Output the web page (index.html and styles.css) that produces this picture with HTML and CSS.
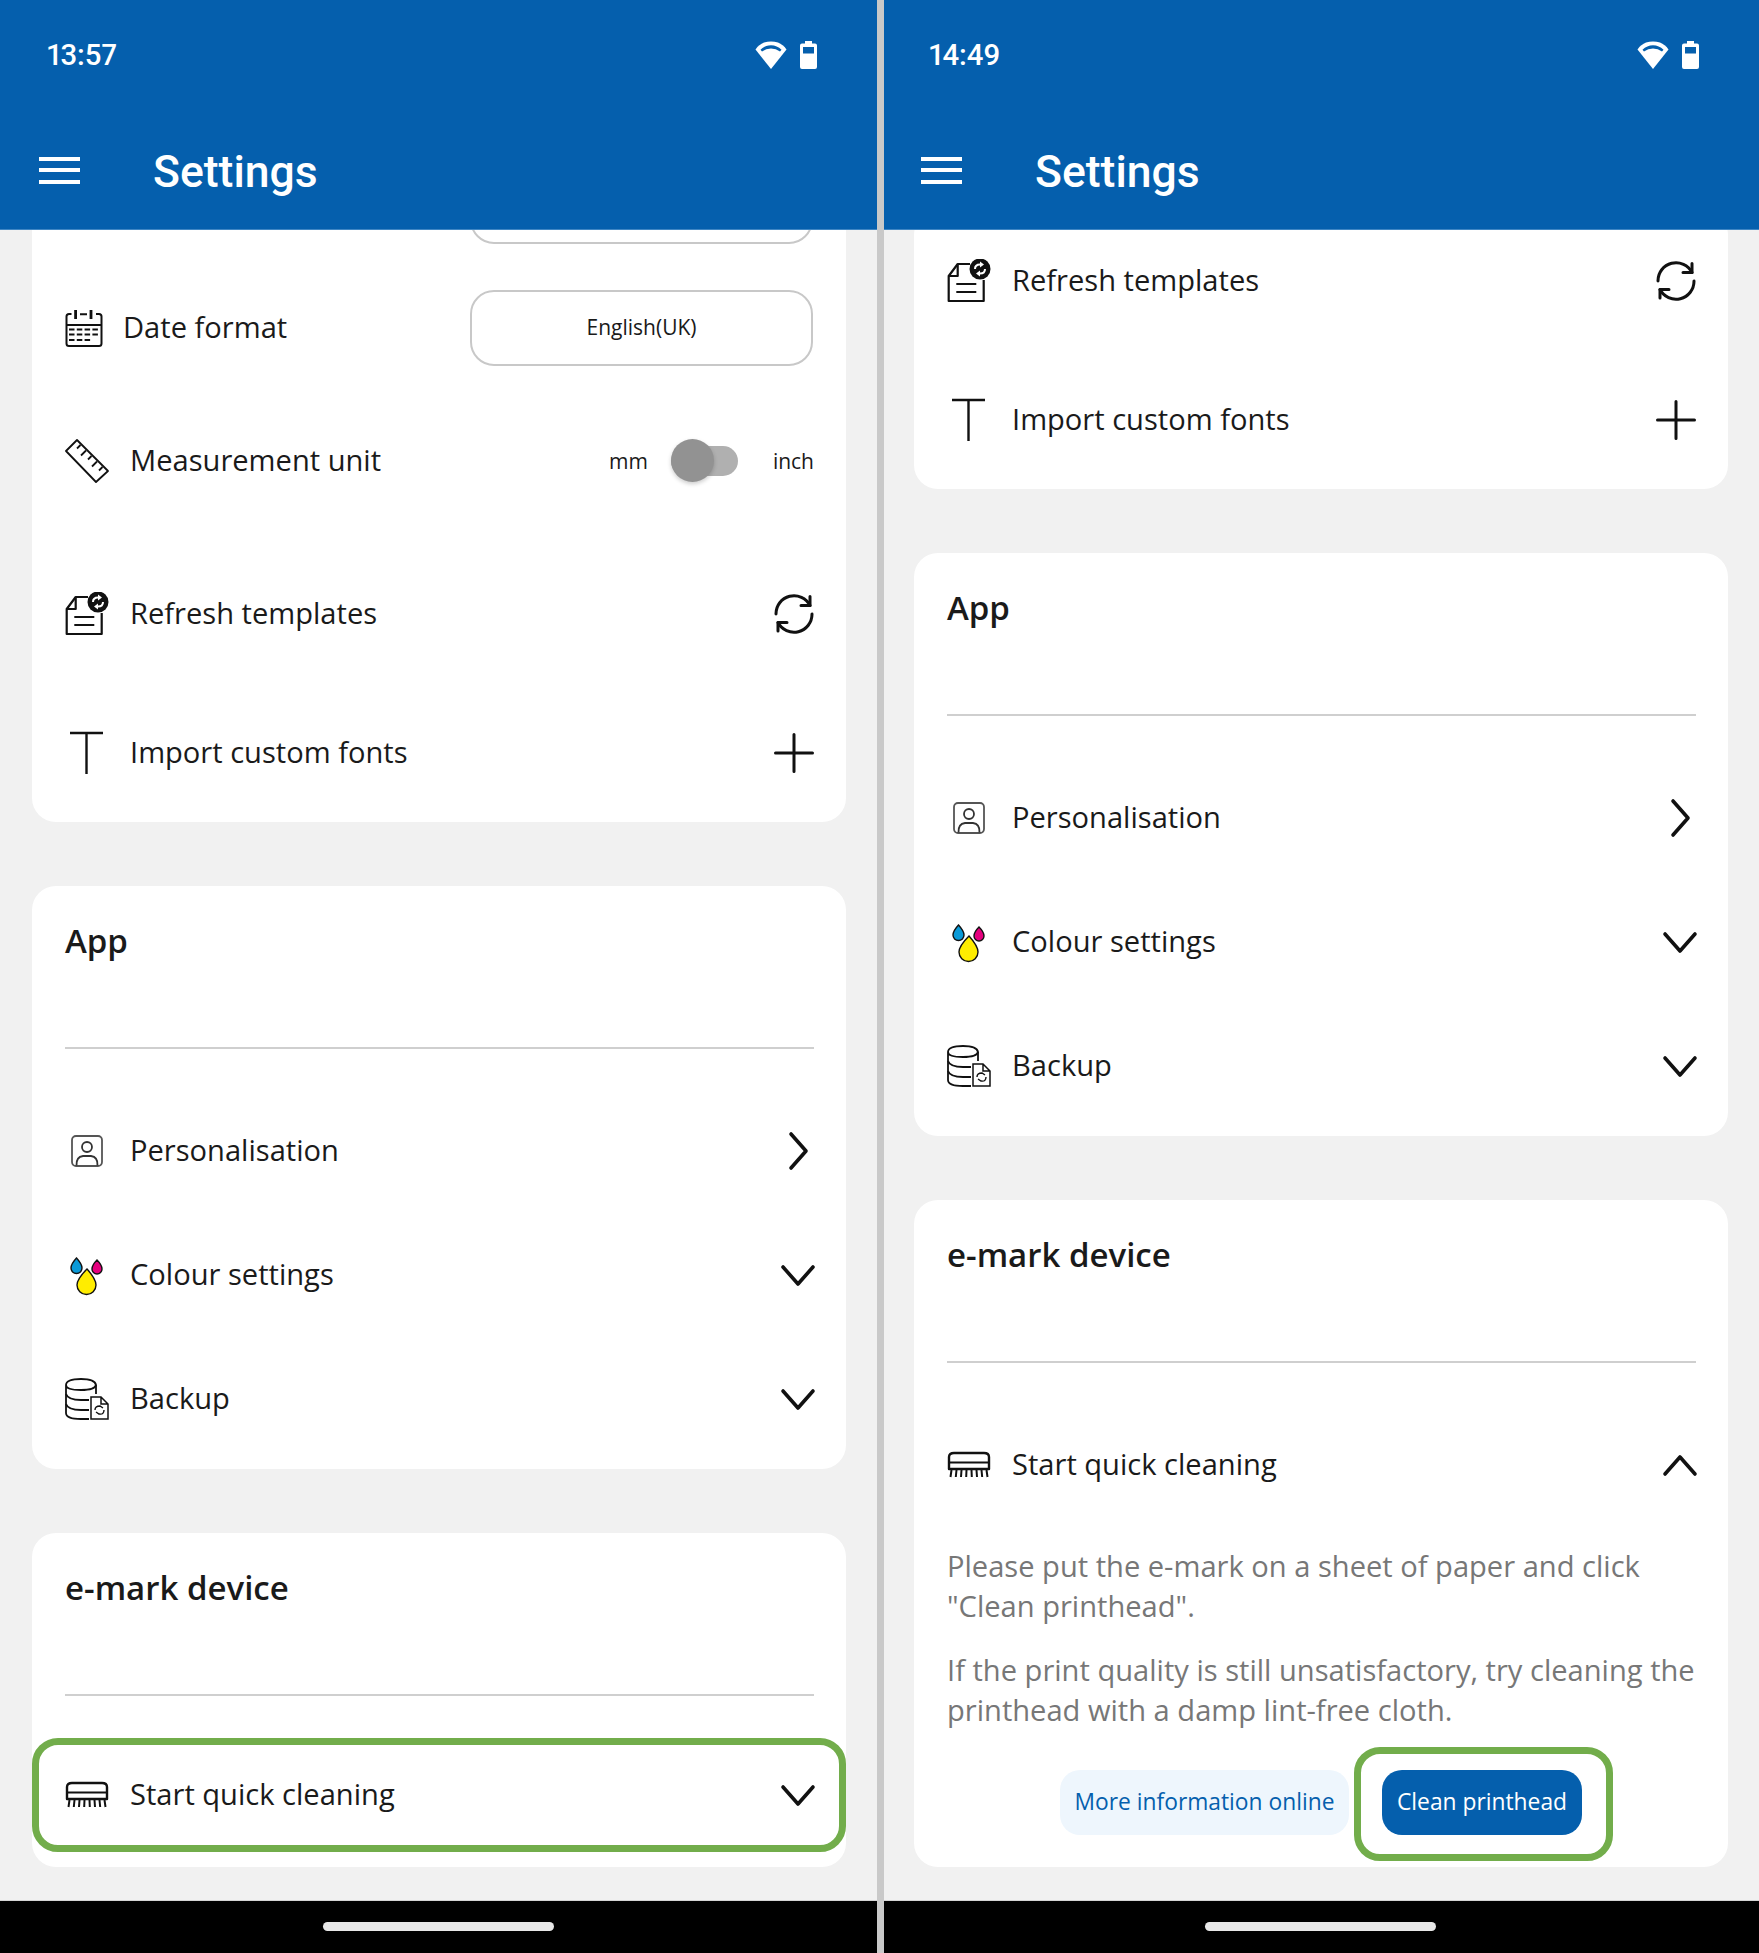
FILE: index.html
```html
<!DOCTYPE html>
<html lang="en">
<head>
  <meta charset="UTF-8">
  <title>Settings</title>
  <link rel="stylesheet" href="styles.css">
</head>
<body>
  <!-- Icon sprite -->
  <svg class="sprite" xmlns="http://www.w3.org/2000/svg">
    <symbol id="i-wifi" viewBox="0 0 32 28">
      <path fill="#fff" d="M16 28 L0.5 8.5 Q4 3.5 9 1.6 Q16 -0.8 23 1.6 Q28 3.5 31.5 8.5 Z"/>
      <path fill="#055fad" d="M5.5 8.8 Q10 4.2 16 4.2 Q22 4.2 26.5 8.8 L25 10.6 Q21 7.4 16 7.4 Q11 7.4 7 10.6 Z"/>
    </symbol>
    <symbol id="i-battery" viewBox="0 0 17 28">
      <path fill="#fff" d="M5 0 H12 V2.500 H15 Q17 2.500 17 4.500 V26 Q17 28 15 28 H2 Q0 28 0 26 V4.500 Q0 2.500 2 2.500 H5 Z"/>
      <rect fill="#055fad" x="3" y="6" width="11" height="6.500"/>
    </symbol>
    <symbol id="i-calendar" viewBox="0 0 44 44">
      <g fill="none" stroke="#111" stroke-width="2">
        <path d="M6.500 8 H4 Q1.500 8 1.500 10.500 V37.500 Q1.500 40 4 40 H34 Q36.500 40 36.500 37.500 V10.500 Q36.500 8 34 8 H31"/>
        <path d="M1.500 19 H36.500 M15 8.300 H22"/>
        <path stroke-width="2.800" d="M10.600 4 V13 M26 4 V13"/>
        <path stroke-dasharray="5.500 2.300" d="M4 23.500 H34 M4 28.500 H34 M4 34 H26"/>
      </g>
    </symbol>
    <symbol id="i-ruler" viewBox="0 0 44 44">
      <g fill="none" stroke="#111" stroke-width="1.800" stroke-linejoin="round">
        <path d="M12 1 L1 12 L31 43 L43 32 Z"/>
        <path d="M15.500 6 L12 9.500 M21 11.500 L16 16.500 M26.500 17 L23 20.500 M32 22.500 L27 27.500 M37.500 28 L34 31.500"/>
      </g>
    </symbol>
    <symbol id="i-template" viewBox="0 0 44 44">
      <g fill="none" stroke="#111" stroke-width="2.200" stroke-linejoin="round">
        <path d="M23 5 H10.700 L1.700 17 V42 H36.700 V21"/>
        <path d="M1.700 17 H10.700 V5"/>
        <path d="M9.300 25 H29.300 M9.300 33 H29.300"/>
      </g>
      <circle cx="33" cy="10" r="10.500" fill="#111"/>
      <path fill="none" stroke="#fff" stroke-width="2" d="M28 10 Q28 5.500 33 5.500 M38 10 Q38 14.500 33 14.500"/>
      <path fill="#fff" d="M33 2.500 L37 5.500 L33 8.500 Z M33 11.500 L29 14.500 L33 17.500 Z"/>
    </symbol>
    <symbol id="i-font" viewBox="0 0 44 44">
      <path fill="none" stroke="#111" stroke-width="2.400" d="M5 2 H38 M21.500 2 V43"/>
    </symbol>
    <symbol id="i-person" viewBox="0 0 44 44">
      <g fill="none" stroke="#333" stroke-width="1.800">
        <rect x="7" y="7" width="30" height="30" rx="4" stroke="#555"/>
        <circle cx="22" cy="18" r="5"/>
        <path d="M11.500 36.500 Q11 28 18 27 H26 Q33 28 32.500 36.500"/>
      </g>
    </symbol>
    <symbol id="i-drops" viewBox="0 0 44 44">
      <path fill="#0a9ad8" stroke="#111" stroke-width="1.400" d="M11.500 5 Q17 11 17 15 A5.500 5.500 0 0 1 6 15 Q6 11 11.500 5 Z"/>
      <path fill="#e5007e" stroke="#111" stroke-width="1.400" d="M32 7 Q37 12 37 16 A5 5 0 0 1 27 16 Q27 12 32 7 Z"/>
      <path fill="#ffed00" stroke="#111" stroke-width="1.400" d="M22 16 Q31 26 31 32 A9.500 9.500 0 0 1 12 32 Q12 26 22 16 Z"/>
    </symbol>
    <symbol id="i-backup" viewBox="0 0 44 44">
      <g fill="none" stroke="#111" stroke-width="1.800">
        <path d="M1 8 Q1 2 16 2 Q30 2 31 8 Q30 13 16 13 Q1 13 1 8 V36 Q1 42 16 42 H24"/>
        <path d="M31 8 V17 M1 17 Q3 23 16 23 H24 M1 27 Q3 33 16 33 H24"/>
        <path stroke-width="1.500" d="M26 20 H36 L43 27 V42 H26 Z M36 20 V27 H43"/>
        <path stroke-width="1.400" d="M30 33 Q30 29 35 29 L38 31 M39 33 Q39 38 34 37 L31 35"/>
      </g>
    </symbol>
    <symbol id="i-brush" viewBox="0 0 44 44">
      <path fill="none" stroke="#111" stroke-width="2.400" stroke-linejoin="round" d="M2 26 V14 Q2 10 7 10 H37 Q42 10 42 14 V26 Z"/>
      <path fill="none" stroke="#111" stroke-width="1.800" d="M2 19.500 H42"/>
      <path fill="none" stroke="#111" stroke-width="2" d="M4.500 27 L3.500 34 M9.500 27 L8.800 34 M14.500 27 L14 34 M19.500 27 L19.200 34 M24.500 27 L24.800 34 M29.500 27 L30 34 M34.500 27 L35.200 34 M39.500 27 L40.500 34"/>
    </symbol>
    <symbol id="i-sync" viewBox="0 0 40 40">
      <g fill="none" stroke="#111" stroke-width="3" stroke-linecap="round" stroke-linejoin="round">
        <path d="M2 20 A18 18 0 0 1 36 11.500"/>
        <path d="M38 20 A18 18 0 0 1 4 28.500"/>
        <path d="M36 2.500 V11.500 H27 M4 37 V28.500 H13"/>
      </g>
    </symbol>
    <symbol id="i-plus" viewBox="0 0 40 40">
      <path fill="none" stroke="#111" stroke-width="3" stroke-linecap="round" d="M20 1.500 V38.500 M1.500 20 H38.500"/>
    </symbol>
    <symbol id="i-right" viewBox="0 0 40 40">
      <path fill="none" stroke="#111" stroke-width="3.600" stroke-linecap="round" stroke-linejoin="round" d="M13 3 L28 20 L13 37"/>
    </symbol>
    <symbol id="i-down" viewBox="0 0 40 40">
      <path fill="none" stroke="#111" stroke-width="3.600" stroke-linecap="round" stroke-linejoin="round" d="M5 12 L20 29 L35 12"/>
    </symbol>
    <symbol id="i-up" viewBox="0 0 40 40">
      <path fill="none" stroke="#111" stroke-width="3.600" stroke-linecap="round" stroke-linejoin="round" d="M5 29 L20 12 L35 29"/>
    </symbol>
  </svg>

  <div class="screens">

    <!-- Left phone -->
    <div class="phone">
      <header class="app-header">
        <div class="status-bar">
          <span class="clock">13:57</span>
          <span class="status-icons">
            <svg class="wifi"><use href="#i-wifi"/></svg>
            <svg class="battery"><use href="#i-battery"/></svg>
          </span>
        </div>
        <div class="toolbar">
          <span class="hamburger"><i></i><i></i><i></i></span>
          <span class="screen-title">Settings</span>
        </div>
      </header>

      <main class="content">
        <section class="card">
          <div class="row-select first-select">
            <span class="select-box"></span>
          </div>
          <div class="row-select">
            <svg class="icon"><use href="#i-calendar"/></svg>
            <span class="label label-tight">Date format</span>
            <span class="select-box">English(UK)</span>
          </div>
          <div class="row row-tall row-unit">
            <svg class="icon"><use href="#i-ruler"/></svg>
            <span class="label">Measurement unit</span>
            <span class="unit">mm</span>
            <span class="toggle"></span>
            <span class="unit">inch</span>
          </div>
          <div class="row row-tall">
            <svg class="icon"><use href="#i-template"/></svg>
            <span class="label">Refresh templates</span>
            <svg class="action"><use href="#i-sync"/></svg>
          </div>
          <div class="row row-tall">
            <svg class="icon"><use href="#i-font"/></svg>
            <span class="label">Import custom fonts</span>
            <svg class="action"><use href="#i-plus"/></svg>
          </div>
        </section>

        <section class="card">
          <h2 class="card-title">App</h2>
          <div class="rows">
            <div class="row">
              <svg class="icon"><use href="#i-person"/></svg>
              <span class="label">Personalisation</span>
              <svg class="action chevron"><use href="#i-right"/></svg>
            </div>
            <div class="row">
              <svg class="icon"><use href="#i-drops"/></svg>
              <span class="label">Colour settings</span>
              <svg class="action chevron"><use href="#i-down"/></svg>
            </div>
            <div class="row">
              <svg class="icon"><use href="#i-backup"/></svg>
              <span class="label">Backup</span>
              <svg class="action chevron"><use href="#i-down"/></svg>
            </div>
          </div>
        </section>

        <section class="card card-last">
          <h2 class="card-title">e-mark device</h2>
          <div class="row row-marked">
            <svg class="icon"><use href="#i-brush"/></svg>
            <span class="label">Start quick cleaning</span>
            <svg class="action chevron"><use href="#i-down"/></svg>
          </div>
        </section>
      </main>

      <footer class="nav-bar"><span class="home-pill"></span></footer>
    </div>

    <div class="divider"></div>

    <!-- Right phone -->
    <div class="phone">
      <header class="app-header">
        <div class="status-bar">
          <span class="clock">14:49</span>
          <span class="status-icons">
            <svg class="wifi"><use href="#i-wifi"/></svg>
            <svg class="battery"><use href="#i-battery"/></svg>
          </span>
        </div>
        <div class="toolbar">
          <span class="hamburger"><i></i><i></i><i></i></span>
          <span class="screen-title">Settings</span>
        </div>
      </header>

      <main class="content">
        <section class="card">
          <div class="row row-tall">
            <svg class="icon"><use href="#i-template"/></svg>
            <span class="label">Refresh templates</span>
            <svg class="action"><use href="#i-sync"/></svg>
          </div>
          <div class="row row-tall">
            <svg class="icon"><use href="#i-font"/></svg>
            <span class="label">Import custom fonts</span>
            <svg class="action"><use href="#i-plus"/></svg>
          </div>
        </section>

        <section class="card">
          <h2 class="card-title">App</h2>
          <div class="rows">
            <div class="row">
              <svg class="icon"><use href="#i-person"/></svg>
              <span class="label">Personalisation</span>
              <svg class="action chevron"><use href="#i-right"/></svg>
            </div>
            <div class="row">
              <svg class="icon"><use href="#i-drops"/></svg>
              <span class="label">Colour settings</span>
              <svg class="action chevron"><use href="#i-down"/></svg>
            </div>
            <div class="row">
              <svg class="icon"><use href="#i-backup"/></svg>
              <span class="label">Backup</span>
              <svg class="action chevron"><use href="#i-down"/></svg>
            </div>
          </div>
        </section>

        <section class="card card-open">
          <h2 class="card-title">e-mark device</h2>
          <div class="row">
            <svg class="icon"><use href="#i-brush"/></svg>
            <span class="label">Start quick cleaning</span>
            <svg class="action chevron"><use href="#i-up"/></svg>
          </div>
          <div class="details">
            <p>Please put the e-mark on a sheet of paper and click "Clean printhead".</p>
            <p>If the print quality is still unsatisfactory, try cleaning the printhead with a damp lint-free cloth.</p>
          </div>
          <div class="actions">
            <button class="btn btn-light">More information online</button>
            <div class="marked-box">
              <button class="btn btn-primary">Clean printhead</button>
            </div>
          </div>
        </section>
      </main>

      <footer class="nav-bar"><span class="home-pill"></span></footer>
    </div>

  </div>
</body>
</html>
```

FILE: styles.css
```css
* {
  box-sizing: border-box;
}

body {
  margin: 0;
  background: #f1f1f1;
  font-family: "Open Sans", "Liberation Sans", sans-serif;
  color: #1a1a1a;
}

.sprite {
  display: none;
}

.screens {
  display: flex;
  height: 1953px;
}

.phone {
  flex: none;
  width: 877px;
  display: flex;
  flex-direction: column;
  background: #f1f1f1;
}

/* the grey bar sits over the first px of the right phone */
.divider {
  flex: none;
  position: relative;
  z-index: 2;
  width: 7px;
  margin-right: -2px;
  background: #c9c9c9;
}

/* Header */
.app-header {
  flex: none;
  height: 230px;
  background: #055fad;
  border-bottom: 1px solid #3f86c4;
  color: #fff;
  font-family: Roboto, "Liberation Sans", sans-serif;
  position: relative;
  z-index: 1;
}

.status-bar {
  display: flex;
  justify-content: space-between;
  align-items: center;
  height: 110px;
  padding: 0 60px 0 47px;
}

.clock {
  font-size: 29.3px;
  font-weight: 500;
  font-variant-numeric: proportional-nums;
}

.status-icons {
  display: flex;
  gap: 13px;
}

.wifi {
  width: 32px;
  height: 28px;
}

.battery {
  width: 17px;
  height: 28px;
}

.toolbar {
  display: flex;
  align-items: center;
  height: 124px;
  padding-left: 39px;
}

.hamburger {
  display: flex;
  flex-direction: column;
  justify-content: space-between;
  width: 41px;
  height: 27px;
  margin-right: 73px;
  margin-top: -4px;
}

.hamburger i {
  height: 4px;
  background: #fff;
}

.screen-title {
  font-size: 44.5px;
  font-weight: 500;
}

/* Cards */
.content {
  flex: 1;
  min-height: 0;
  overflow: hidden;
  display: flex;
  flex-direction: column;
  justify-content: flex-end;
  gap: 64px;
  padding: 0 31px 33px 32px;
}

.card {
  flex: none;
  background: #fff;
  border-radius: 24px;
  padding: 0 32px 0 33px;
}

.card-title {
  height: 163px;
  margin: 0 0 40px;
  font-size: 33px;
  font-weight: 600;
  line-height: 110px;
  border-bottom: 2px solid #cfcfcf;
}

.rows {
  padding-bottom: 8px;
}

.row,
.row-select {
  display: flex;
  align-items: center;
}

.row {
  height: 124px;
}

.row-tall {
  height: 139px;
}

.row-unit {
  margin-bottom: 14px;
}

.row-select {
  height: 76px;
  margin-bottom: 25px;
}

.first-select {
  justify-content: flex-end;
  margin-bottom: 46px;
}

.icon {
  flex: none;
  width: 44px;
  height: 44px;
  margin-right: 21px;
}

.label {
  flex: 1;
  padding-bottom: 2px;
  font-size: 29.1px;
}

.label-tight {
  margin-left: -7px;
}

.action {
  flex: none;
  width: 40px;
  height: 40px;
}

.chevron {
  margin-right: -4px;
}

.select-box {
  flex: none;
  display: flex;
  align-items: center;
  justify-content: center;
  width: 343px;
  height: 76px;
  margin-right: 1px;
  padding-bottom: 2px;
  border: 2px solid #c8c8c8;
  border-radius: 24px;
  font-size: 21px;
}

.unit {
  font-size: 21px;
}

.toggle {
  position: relative;
  width: 67px;
  height: 30px;
  margin: 0 35px 0 23px;
  background: #b0b0b0;
  border-radius: 15px;
}

.toggle::before {
  content: "";
  position: absolute;
  left: 0;
  top: -7px;
  width: 43px;
  height: 43px;
  background: #929292;
  border-radius: 50%;
  box-shadow: 0 2px 4px rgba(0,0,0,0.2);
}

/* Green highlight boxes */
.card-last {
  padding-bottom: 15px;
}

.card-last .card-title {
  margin-bottom: 42px;
}

.row-marked {
  height: 114px;
  margin: 0 -32px 0 -33px;
  padding: 0 25px 0 26px;
  border: 7px solid #72ad4b;
  border-radius: 26px;
}

/* Expanded cleaning section */
.details {
  padding-top: 19px;
  padding-bottom: 2px;
  font-size: 29.1px;
  line-height: 40px;
  color: #777;
}

.details p {
  margin: 0 0 24px;
}

.details p:last-child {
  margin-bottom: 0;
}

.actions {
  display: flex;
  align-items: flex-start;
  gap: 5px;
  margin-top: 15px;
  padding: 0 0 6px 113px;
}

.btn {
  height: 65px;
  border: none;
  border-radius: 20px;
  padding: 0 0 2px;
  font-family: inherit;
  font-size: 22.8px;
}

.btn-light {
  width: 289px;
  margin-top: 23px;
  background: #eef6fd;
  color: #055fad;
}

.btn-primary {
  display: block;
  width: 200px;
  background: #055fad;
  color: #fff;
}

.marked-box {
  padding: 16px 24px 19px 21px;
  border: 7px solid #72ad4b;
  border-radius: 26px;
}

/* Bottom nav */
.nav-bar {
  flex: none;
  display: flex;
  justify-content: center;
  height: 53px;
  padding-top: 21px;
  background: #000;
  border-top: 1px solid #d4d4d4;
}

.home-pill {
  width: 231px;
  height: 9px;
  background: #e8e8e8;
  border-radius: 5px;
}
```
